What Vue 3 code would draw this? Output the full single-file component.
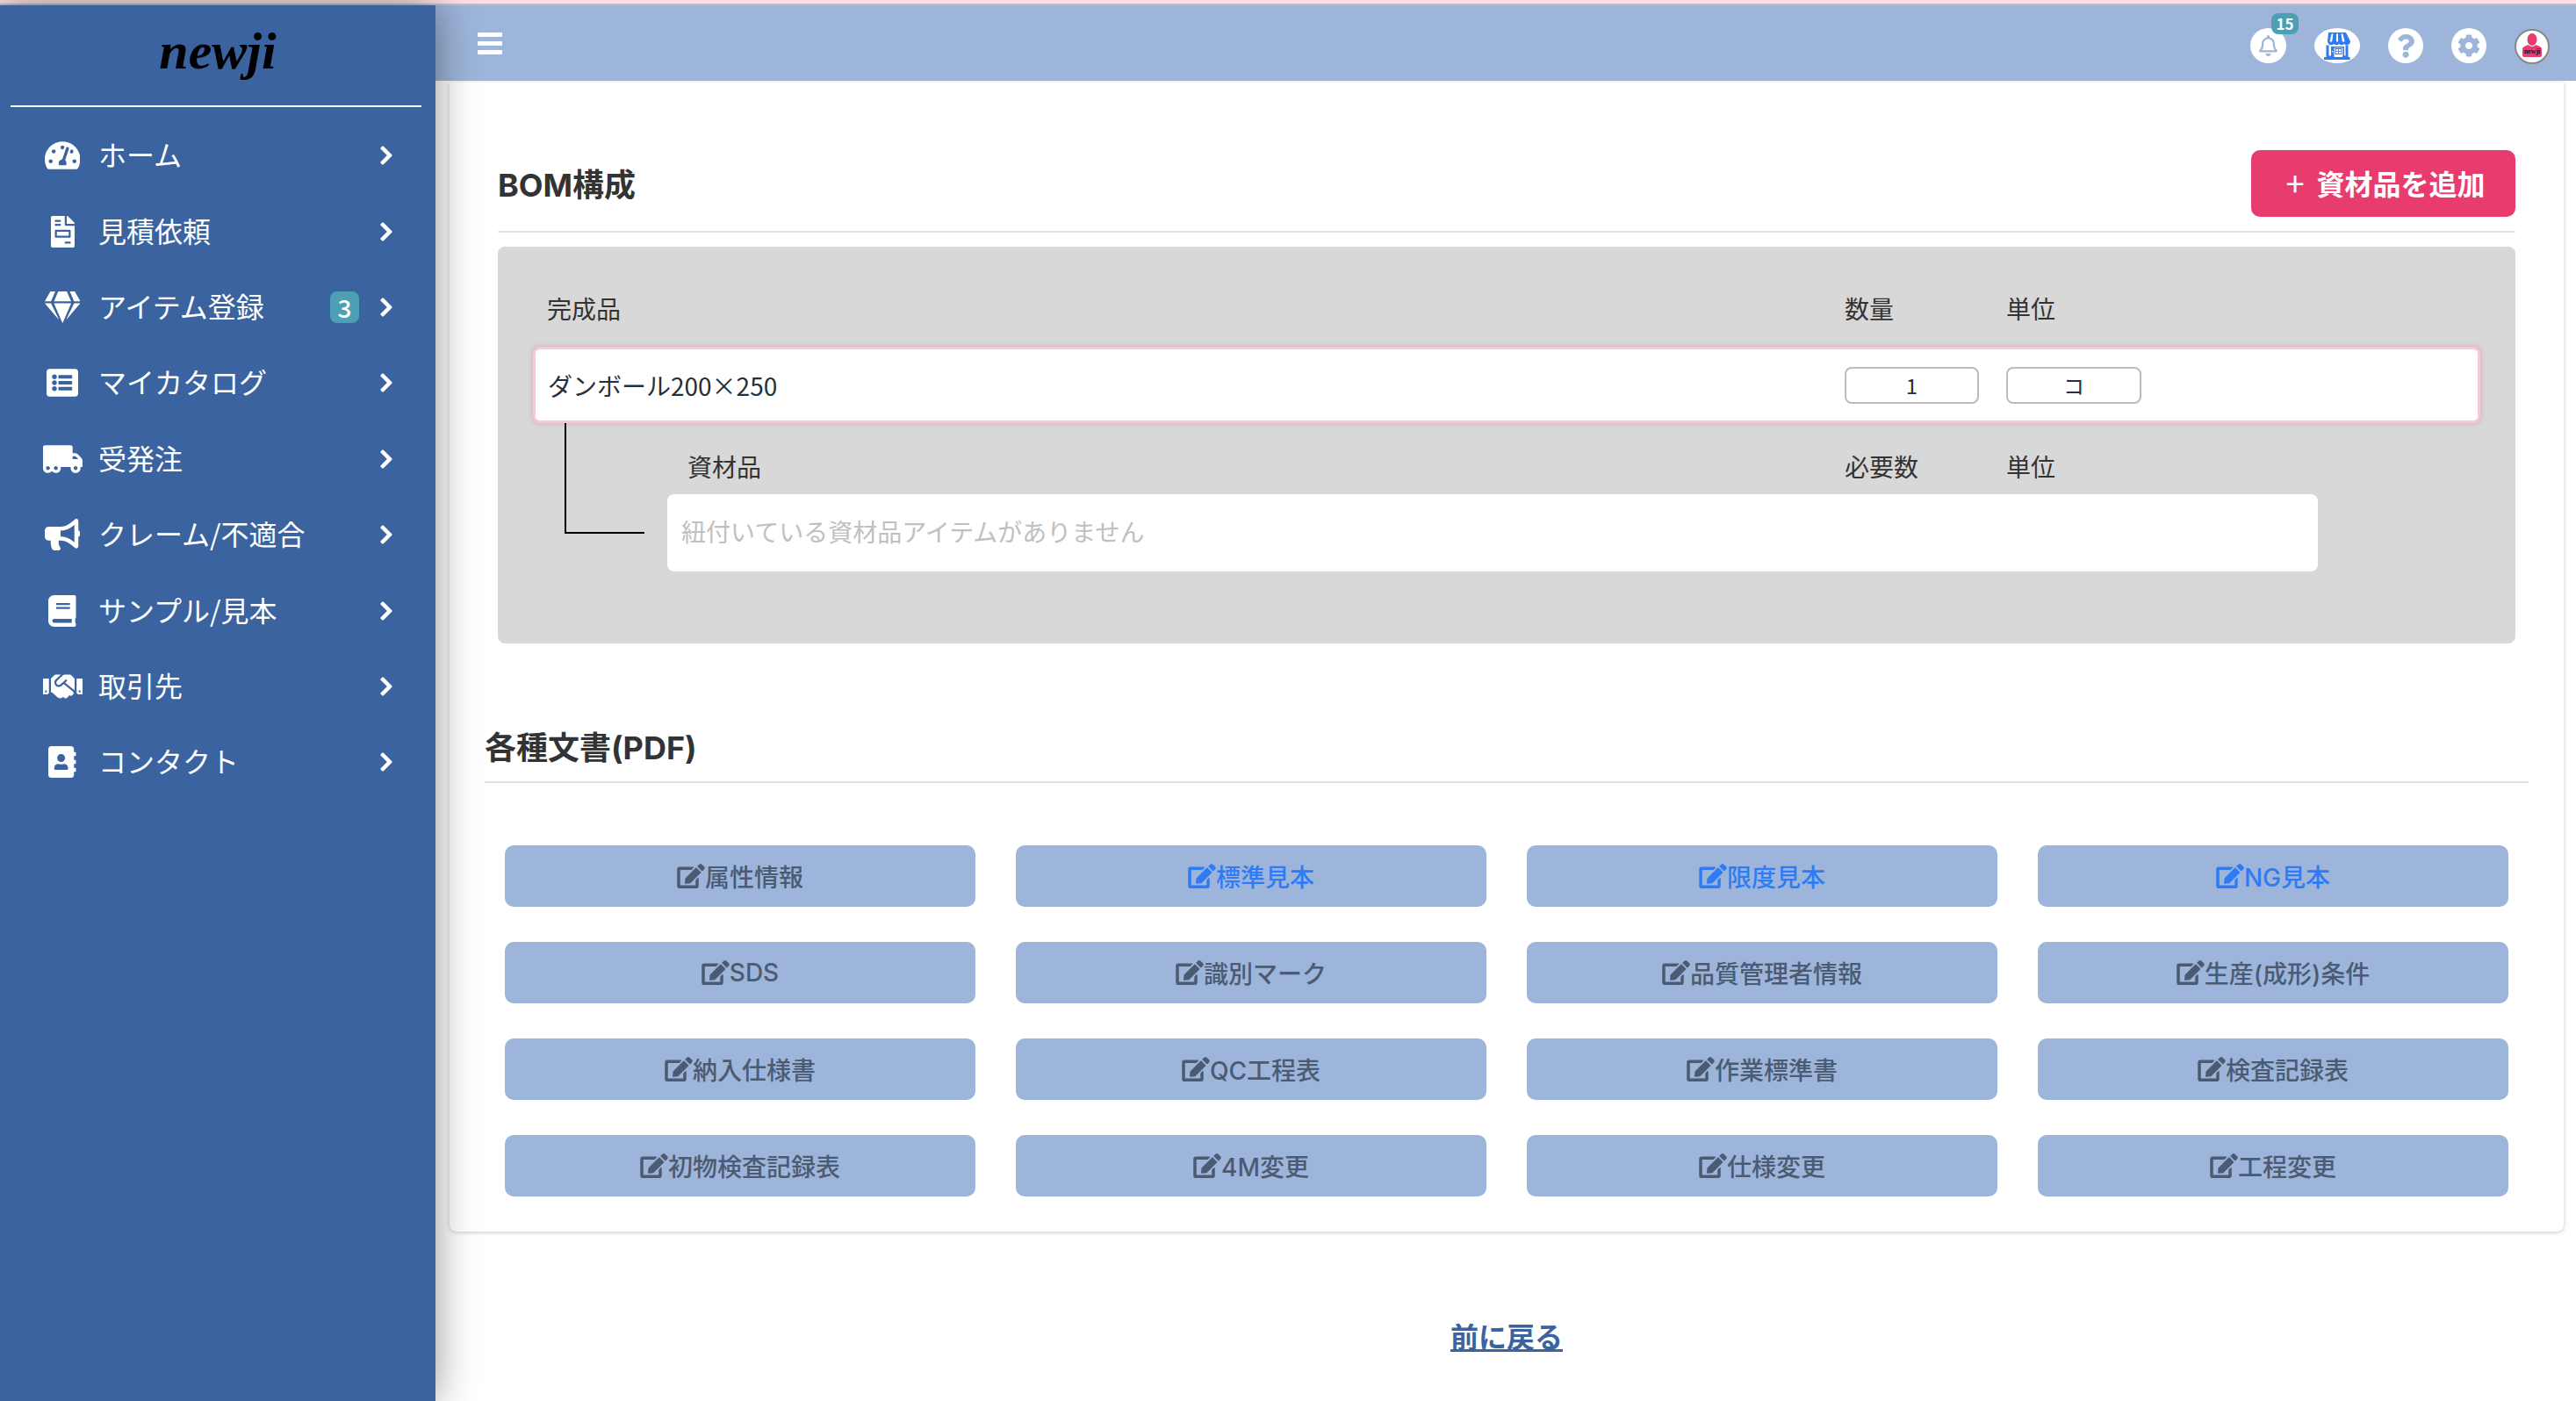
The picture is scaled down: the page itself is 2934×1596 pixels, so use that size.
<script setup>
const menu = [
  { label: 'ホーム', vb: '0 0 576 512', d: 'M288 32C128.94 32 0 160.94 0 320c0 52.8 14.25 102.26 39.06 144.8 5.61 9.62 16.3 15.2 27.44 15.2h443c11.14 0 21.83-5.58 27.44-15.2C561.75 422.26 576 372.8 576 320c0-159.06-128.94-288-288-288zm0 64c14.71 0 26.58 10.13 30.32 23.65-1.11 2.26-2.64 4.23-3.45 6.67l-9.22 27.67c-5.13 3.49-10.97 6.01-17.64 6.01-17.67 0-32-14.33-32-32S270.33 96 288 96zM96 384c-17.67 0-32-14.33-32-32s14.33-32 32-32 32 14.33 32 32-14.33 32-32 32zm48-160c-17.67 0-32-14.33-32-32s14.33-32 32-32 32 14.33 32 32-14.33 32-32 32zm246.77-72.41l-61.33 184C343.13 347.33 352 364.54 352 384c0 11.72-3.38 22.55-8.88 32H232.88c-5.5-9.45-8.88-20.28-8.88-32 0-33.94 26.5-61.43 59.9-63.59l61.34-184.01c4.17-12.56 17.73-19.45 30.36-15.17 12.57 4.19 19.35 17.79 15.17 30.36zm14.66 57.2l15.52-46.55c3.47-1.29 7.13-2.23 11.05-2.23 17.67 0 32 14.33 32 32s-14.33 32-32 32c-11.38-.01-20.89-6.28-26.57-15.22zM480 384c-17.67 0-32-14.33-32-32s14.33-32 32-32 32 14.33 32 32-14.33 32-32 32z' },
  { label: '見積依頼', vb: '0 0 384 512', d: 'M288 256H96v64h192v-64zm89-151L279.1 7c-4.5-4.5-10.6-7-17-7H256v128h128v-6.1c0-6.3-2.5-12.4-7-16.9zm-153 31V0H24C10.7 0 0 10.7 0 24v464c0 13.3 10.7 24 24 24h336c13.3 0 24-10.7 24-24V160H248c-13.2 0-24-10.8-24-24zM64 72c0-4.42 3.58-8 8-8h80c4.42 0 8 3.58 8 8v16c0 4.42-3.58 8-8 8H72c-4.42 0-8-3.58-8-8V72zm0 64c0-4.42 3.58-8 8-8h80c4.42 0 8 3.58 8 8v16c0 4.42-3.58 8-8 8H72c-4.42 0-8-3.58-8-8v-16zm256 304c0 4.42-3.58 8-8 8h-80c-4.42 0-8-3.58-8-8v-16c0-4.42 3.58-8 8-8h80c4.42 0 8 3.58 8 8v16zm0-200v96c0 8.84-7.16 16-16 16H80c-8.84 0-16-7.16-16-16v-96c0-8.84 7.16-16 16-16h224c8.84 0 16 7.16 16 16z' },
  { label: 'アイテム登録', badge: 3, vb: '0 0 576 512', d: 'M485.5 0L576 160H474.9L405.7 0h79.8zm-128 0l69.2 160H149.3L218.5 0h139zm-267 0h79.8l-69.2 160H0L90.5 0zM0 192h100.7l123 251.7c1.5 3.1-2.7 5.9-5 3.3L0 192zm148.2 0h279.6l-137 318.2c-1 2.4-4.5 2.4-5.5 0L148.2 192zm204.1 251.7l123-251.7H576L357.3 446.9c-2.3 2.7-6.5-.1-5-3.2z' },
  { label: 'マイカタログ', vb: '0 0 512 512', d: 'M464 480H48c-26.51 0-48-21.49-48-48V80c0-26.51 21.49-48 48-48h416c26.51 0 48 21.49 48 48v352c0 26.51-21.49 48-48 48zM128 120c-22.091 0-40 17.909-40 40s17.909 40 40 40 40-17.909 40-40-17.909-40-40-40zm0 96c-22.091 0-40 17.909-40 40s17.909 40 40 40 40-17.909 40-40-17.909-40-40-40zm0 96c-22.091 0-40 17.909-40 40s17.909 40 40 40 40-17.909 40-40-17.909-40-40-40zm288-136v-32c0-6.627-5.373-12-12-12H204c-6.627 0-12 5.373-12 12v32c0 6.627 5.373 12 12 12h200c6.627 0 12-5.373 12-12zm0 96v-32c0-6.627-5.373-12-12-12H204c-6.627 0-12 5.373-12 12v32c0 6.627 5.373 12 12 12h200c6.627 0 12-5.373 12-12zm0 96v-32c0-6.627-5.373-12-12-12H204c-6.627 0-12 5.373-12 12v32c0 6.627 5.373 12 12 12h200c6.627 0 12-5.373 12-12z' },
  { label: '受発注', vb: '0 0 640 512', d: 'M621.3 237.3l-58.5-58.5c-12-12-28.3-18.7-45.3-18.7H480V64c0-17.7-14.3-32-32-32H32C14.3 32 0 46.3 0 64v336c0 44.2 35.8 80 80 80 26.3 0 49.4-12.9 64-32.4 14.6 19.6 37.7 32.4 64 32.4 44.2 0 80-35.8 80-80 0-5.5-.6-10.8-1.6-16h163.2c-1.1 5.2-1.6 10.5-1.6 16 0 44.2 35.8 80 80 80s80-35.8 80-80c0-5.5-.6-10.8-1.6-16H624c8.8 0 16-7.2 16-16v-85.5c0-17-6.7-33.2-18.7-45.2zM80 432c-17.6 0-32-14.4-32-32s14.4-32 32-32 32 14.4 32 32-14.4 32-32 32zm128 0c-17.6 0-32-14.4-32-32s14.4-32 32-32 32 14.4 32 32-14.4 32-32 32zm272-224h37.5c4.3 0 8.3 1.7 11.3 4.7l43.3 43.3H480v-48zm48 224c-17.6 0-32-14.4-32-32s14.4-32 32-32 32 14.4 32 32-14.4 32-32 32z' },
  { label: 'クレーム/不適合', vb: '0 0 576 512', d: 'M576 240c0-23.63-12.95-44.04-32-55.12V32.01C544 23.26 537.02 0 512 0c-7.12 0-14.19 2.38-19.98 7.02l-85.03 68.03C364.28 109.19 310.66 128 256 128H64c-35.35 0-64 28.65-64 64v96c0 35.35 28.65 64 64 64h33.7c-1.39 10.48-2.18 21.14-2.18 32 0 39.77 9.26 77.35 25.56 110.94 5.19 10.69 16.52 17.06 28.4 17.06h74.28c26.05 0 41.69-29.84 25.9-50.56-16.4-21.52-26.15-48.36-26.15-77.44 0-11.11 1.62-21.79 4.41-32H256c54.66 0 108.28 18.81 150.98 52.95l85.03 68.03a32.023 32.023 0 0 0 19.98 7.02c24.92 0 32-22.78 32-32V295.13C563.05 284.04 576 263.63 576 240zm-96 141.42l-33.05-26.44C392.95 311.78 325.12 288 256 288v-96c69.12 0 136.95-23.78 190.95-66.98L480 98.58v282.84z' },
  { label: 'サンプル/見本', vb: '0 0 448 512', d: 'M448 360V24c0-13.3-10.7-24-24-24H96C43 0 0 43 0 96v320c0 53 43 96 96 96h328c13.3 0 24-10.7 24-24v-16c0-7.5-3.5-14.3-8.9-18.7-4.2-15.4-4.2-59.3 0-74.7 5.4-4.3 8.9-11.1 8.9-18.6zM128 134c0-3.3 2.7-6 6-6h212c3.3 0 6 2.7 6 6v20c0 3.3-2.7 6-6 6H134c-3.3 0-6-2.7-6-6v-20zm0 64c0-3.3 2.7-6 6-6h212c3.3 0 6 2.7 6 6v20c0 3.3-2.7 6-6 6H134c-3.3 0-6-2.7-6-6v-20zm253.4 250H96c-17.7 0-32-14.3-32-32 0-17.6 14.4-32 32-32h285.4c-1.9 17.1-1.9 46.9 0 64z' },
  { label: '取引先', vb: '0 0 640 512', d: 'M434.7 64h-85.9c-8 0-15.7 3-21.6 8.4l-98.3 90c-.1.1-.2.3-.3.4-16.6 15.6-16.3 40.5-2.1 56 12.7 13.9 39.4 17.6 56.1 2.7.1-.1.3-.1.4-.2l79.9-73.2c6.5-5.9 16.7-5.5 22.6 1 6 6.5 5.5 16.6-1 22.6l-26.1 23.9L504 313.8c2.9 2.4 5.5 5 7.9 7.7V128l-54.6-54.6c-5.9-6-14.1-9.4-22.6-9.4zM544 128.2v223.9c0 17.7 14.3 32 32 32h64V128.2h-96zm48 223.9c-8.8 0-16-7.2-16-16s7.2-16 16-16 16 7.2 16 16-7.2 16-16 16zM0 384h64c17.7 0 32-14.3 32-32V128.2H0V384zm48-63.9c8.8 0 16 7.2 16 16s-7.2 16-16 16-16-7.2-16-16c0-8.9 7.2-16 16-16zm435.9 18.6L334.6 217.5l-30 27.5c-29.7 27.1-75.2 24.5-101.7-4.4-26.9-29.4-24.8-74.9 4.4-101.7L289.1 64h-83.8c-8.5 0-16.6 3.4-22.6 9.4L128 128v223.9h18.3l90.5 81.9c27.4 22.3 67.7 18.1 90-9.3l.2-.2 17.9 15.5c15.9 13 39.4 10.5 52.3-5.4l31.4-38.6 5.4 4.4c13.7 11.1 33.9 9.1 45-4.7l9.5-11.7c11.2-13.8 9.1-33.9-4.6-45.1z' },
  { label: 'コンタクト', vb: '0 0 448 512', d: 'M436 160c6.6 0 12-5.4 12-12v-40c0-6.6-5.4-12-12-12h-20V48c0-26.5-21.5-48-48-48H48C21.5 0 0 21.5 0 48v416c0 26.5 21.5 48 48 48h320c26.5 0 48-21.5 48-48v-48h20c6.6 0 12-5.4 12-12v-40c0-6.6-5.4-12-12-12h-20v-64h20c6.6 0 12-5.4 12-12v-40c0-6.6-5.4-12-12-12h-20v-64h20zm-228-32c35.3 0 64 28.7 64 64s-28.7 64-64 64-64-28.7-64-64 28.7-64 64-64zm112 236.8c0 10.6-10 19.2-22.4 19.2H118.4C106 384 96 375.4 96 364.8v-19.2c0-31.8 30.1-57.6 67.2-57.6h5c12.3 5.1 25.7 8 39.8 8s27.6-2.9 39.8-8h5c37.1 0 67.2 25.8 67.2 57.6v19.2z' }
]

const docs = [
  { label: '属性情報' }, { label: '標準見本', on: true }, { label: '限度見本', on: true }, { label: 'NG見本', on: true },
  { label: 'SDS' }, { label: '識別マーク' }, { label: '品質管理者情報' }, { label: '生産(成形)条件' },
  { label: '納入仕様書' }, { label: 'QC工程表' }, { label: '作業標準書' }, { label: '検査記録表' },
  { label: '初物検査記録表' }, { label: '4M変更' }, { label: '仕様変更' }, { label: '工程変更' }
]

const editPath = 'M402.6 83.2l90.2 90.2c3.8 3.8 3.8 10 0 13.8L274.4 405.6l-92.8 10.3c-12.4 1.4-22.9-9.1-21.5-21.5l10.3-92.8L388.8 83.2c3.8-3.8 10-3.8 13.8 0zm162-22.9l-48.8-48.8c-15.2-15.2-39.9-15.2-55.2 0l-35.4 35.4c-3.8 3.8-3.8 10 0 13.8l90.2 90.2c3.8 3.8 10 3.8 13.8 0l35.4-35.4c15.2-15.3 15.2-40 0-55.2zM384 346.2V448H64V128h229.8c3.2 0 6.2-1.3 8.5-3.5l40-40c7.6-7.6 2.2-20.5-8.5-20.5H48C21.5 64 0 85.5 0 112v352c0 26.5 21.5 48 48 48h352c26.5 0 48-21.5 48-48V306.2c0-10.7-12.9-16-20.5-8.5l-40 40c-2.2 2.3-3.5 5.3-3.5 8.5z'
const chevron = 'M285.476 272.971L91.132 467.314c-9.373 9.373-24.569 9.373-33.941 0l-22.667-22.667c-9.357-9.357-9.375-24.522-.04-33.901L188.505 256 34.484 101.255c-9.335-9.379-9.317-24.544.04-33.901l22.667-22.667c9.373-9.373 24.569-9.373 33.941 0L285.475 239.03c9.373 9.372 9.373 24.568.001 33.941z'
</script>

<template>
  <div class="page">
    <div class="strip"></div>
    <div class="body">
      <aside class="sidebar">
        <div class="logo">newji</div>
        <div class="logo-rule"></div>
        <nav class="menu">
          <a v-for="m in menu" :key="m.label" class="menu-item">
            <span class="menu-icon">
              <svg :viewBox="m.vb" class="fa36"><path :d="m.d" fill="#fff" /></svg>
            </span>
            <span class="menu-label">{{ m.label }}</span>
            <span v-if="m.badge" class="menu-badge">{{ m.badge }}</span>
            <svg viewBox="0 0 320 512" class="chev"><path :d="chevron" fill="#fff" stroke="#fff" stroke-width="18" /></svg>
          </a>
        </nav>
      </aside>

      <div class="main">
        <header class="topbar">
          <div class="burger"><i></i><i></i><i></i></div>
          <div class="top-icons">
            <div class="circle bell">
              <svg viewBox="0 0 448 512" class="ic-bell"><path fill="#9db5da" d="M439.39 362.29c-19.32-20.76-55.47-51.99-55.47-154.29 0-77.7-54.48-139.9-127.94-155.16V32c0-17.67-14.32-32-31.98-32s-31.98 14.33-31.98 32v20.84C118.56 68.1 64.08 130.3 64.08 208c0 102.3-36.15 133.53-55.47 154.29-6 6.45-8.66 14.16-8.61 21.71.11 16.4 12.98 32 32.1 32h383.8c19.12 0 32-15.6 32.1-32 .05-7.55-2.61-15.27-8.61-21.71zM67.53 368c21.22-27.97 44.42-74.33 44.53-159.42 0-.2-.06-.38-.06-.58 0-61.86 50.14-112 112-112s112 50.14 112 112c0 .2-.06.38-.06.58.11 85.1 23.31 131.46 44.53 159.42H67.53zM224 512c35.32 0 63.97-28.65 63.97-64H160.03c0 35.35 28.65 64 63.97 64z" /></svg>
              <span class="bell-badge">15</span>
            </div>
            <div class="circle store">
              <svg viewBox="0 0 30 31" class="ic-store">
                <path fill="#2f7bf6" d="M5 0h20l5 10c0 2.6-1.8 4.2-4 4.2-1.2 0-2.2-.5-3-1.300-.8.8-1.900 1.300-3.200 1.300-1 0-2-.4-2.800-1.200-.8.8-1.800 1.200-2.800 1.200-1.200 0-2.300-.5-3.100-1.300-.8.8-1.900 1.300-3.100 1.300-2.200 0-4-1.600-4-4.200z" />
                <path fill="#fff" d="M8.600 1.500h1.900l-1.400 9H6.400zM14 1.500h2v9h-2zM19.500 1.500h1.900l2.200 9h-2.700z" />
                <path fill="#2f7bf6" d="M2.500 14.500h3v12h3.500v-9.500h11v9.500h4.500v-12h3v13.500h2V31H0v-3h2.500z" />
                <rect x="9" y="17" width="12" height="11" fill="#fff" />
                <path fill="#2f7bf6" d="M8 16h3.500v12H8zM11 16h11v1.500H11zM21.500 16h1.500v12h-1.500z" />
                <rect x="13" y="18.500" width="7" height="6" fill="#fff" stroke="#2f7bf6" stroke-width="1" />
                <path stroke="#2f7bf6" stroke-width=".8" d="M16.500 18.500v6M13 21.500h7" />
                <rect x="9.200" y="21" width="1.200" height="1.500" fill="#fff" />
              </svg>
            </div>
            <div class="circle">
              <svg viewBox="0 0 384 512" class="ic-help"><path fill="#9db5da" d="M202.021 0C122.202 0 70.503 32.703 29.914 91.026c-7.363 10.58-5.093 25.086 5.178 32.874l43.138 32.709c10.373 7.865 25.132 6.026 33.253-4.148 25.049-31.381 43.63-49.449 82.757-49.449 30.764 0 68.816 19.799 68.816 49.631 0 22.552-18.617 34.134-48.993 51.164-35.423 19.86-82.299 44.576-82.299 106.405V320c0 13.255 10.745 24 24 24h72.471c13.255 0 24-10.745 24-24v-5.773c0-42.86 125.268-44.645 125.268-160.627C377.504 66.256 286.902 0 202.021 0zM192 373.459c-38.196 0-69.271 31.075-69.271 69.271 0 38.195 31.075 69.27 69.271 69.27s69.271-31.075 69.271-69.271-31.075-69.27-69.271-69.27z" /></svg>
            </div>
            <div class="circle">
              <svg viewBox="0 0 512 512" class="ic-gear"><path fill="#9db5da" d="M487.4 315.7l-42.6-24.6c4.3-23.2 4.3-47 0-70.2l42.6-24.6c4.9-2.8 7.1-8.6 5.5-14-11.1-35.6-30-67.8-54.7-94.6-3.8-4.1-10-5.1-14.8-2.3L380.8 110c-17.9-15.4-38.5-27.3-60.8-35.1V25.8c0-5.6-3.9-10.5-9.4-11.7-36.7-8.2-74.3-7.8-109.2 0-5.5 1.2-9.4 6.1-9.4 11.7V75c-22.2 7.9-42.8 19.8-60.8 35.1L88.7 85.5c-4.9-2.8-11-1.9-14.8 2.3-24.7 26.7-43.6 58.9-54.7 94.6-1.7 5.4.6 11.2 5.5 14L67.3 221c-4.3 23.2-4.3 47 0 70.2l-42.6 24.6c-4.9 2.8-7.1 8.6-5.5 14 11.1 35.6 30 67.8 54.7 94.6 3.8 4.1 10 5.1 14.8 2.3l42.6-24.6c17.9 15.4 38.5 27.3 60.8 35.1v49.2c0 5.6 3.9 10.5 9.4 11.7 36.7 8.2 74.3 7.8 109.2 0 5.5-1.2 9.4-6.1 9.4-11.7v-49.2c22.2-7.9 42.8-19.8 60.8-35.1l42.6 24.6c4.9 2.8 11 1.9 14.8-2.3 24.7-26.7 43.6-58.9 54.7-94.6 1.5-5.5-.7-11.3-5.6-14.1zM256 336c-44.1 0-80-35.9-80-80s35.9-80 80-80 80 35.9 80 80-35.9 80-80 80z" /></svg>
            </div>
            <div class="avatar">
              <svg viewBox="0 0 36 36" class="ic-avatar">
                <ellipse cx="18" cy="10" rx="5.500" ry="7" fill="#e83b6e" />
                <path fill="#e83b6e" d="M14 16c-3 1-6 2-7 4v8c0 1 1 2 2 2h18c1 0 2-1 2-2v-8c-1-2-4-3-7-4-1 1.500-2.500 2-4 2s-3-.5-4-2z" />
                <text x="18" y="26" class="avatar-text" text-anchor="middle">newji</text>
              </svg>
            </div>
          </div>
        </header>

        <section class="panel">
          <div class="title-row">
            <h2 class="title">BOM構成</h2>
            <button class="add-btn"><span class="plus">+</span>資材品を追加</button>
          </div>

          <div class="bom">
            <div class="cols head">
              <span>完成品</span><span>数量</span><span>単位</span>
            </div>
            <div class="cols product">
              <span class="product-name">ダンボール200×250</span>
              <span class="field">1</span>
              <span class="field">コ</span>
            </div>
            <div class="sub">
              <div class="connector"></div>
              <div class="cols head sub-head">
                <span>資材品</span><span>必要数</span><span>単位</span>
              </div>
              <div class="empty">紐付いている資材品アイテムがありません</div>
            </div>
          </div>

          <div class="docs-head">
            <h2 class="title">各種文書(PDF)</h2>
          </div>
          <div class="docs">
            <a v-for="d in docs" :key="d.label" class="doc" :class="{ on: d.on }">
              <svg viewBox="0 0 576 512" class="doc-icon"><path :d="editPath" fill="currentColor" /></svg>{{ d.label }}
            </a>
          </div>
        </section>

        <div class="back"><a class="back-link">前に戻る</a></div>
      </div>
    </div>
  </div>
</template>

<style>
html, body { margin: 0; background: #fff; overflow: hidden; }
</style>

<style scoped>
* { box-sizing: border-box; }
.page {
  width: 2934px;
  height: 1596px;
  display: flex;
  flex-direction: column;
  font-family: "Noto Sans CJK JP", "Noto Sans", sans-serif;
  color: #2c3a4b;
  overflow: hidden;
}
.strip {
  height: 6px;
  flex: none;
  background: #fbdfe2;
  border-bottom: 2px solid #c6bcc6;
}
.body { flex: 1; display: flex; min-height: 0; }

.sidebar {
  width: 496px;
  flex: none;
  background: #3a63a0;
  box-shadow: 0 0 44px rgba(0, 0, 0, .42);
  position: relative;
  z-index: 2;
}
.logo {
  height: 114px;
  padding-top: 22px;
  text-align: center;
  font-family: "Liberation Serif", serif;
  font-style: italic;
  font-weight: 700;
  font-size: 60px;
  line-height: 60px;
  color: #000;
}
.logo-rule { height: 2px; margin: 0 16px 0 12px; background: #fff; }
.menu { padding-top: 12px; }
.menu-item {
  height: 86.4px;
  display: flex;
  align-items: center;
  padding: 0 48px 0 48px;
  color: #fff;
}
.menu-icon { width: 46px; margin-right: 18px; display: flex; justify-content: center; flex: none; }
.fa36 { height: 36px; display: block; }
.menu-label { flex: 1; font-size: 32px; line-height: 44px; padding-bottom: 4px; }
.menu-badge {
  width: 33px;
  height: 36px;
  margin-right: 23px;
  border-radius: 8px;
  background: #4da0b3;
  color: #fff;
  font-size: 28px;
  font-weight: 500;
  line-height: 36px;
  text-align: center;
}
.chev { width: 16px; height: 24px; display: block; flex: none; }

.main { flex: 1; min-width: 0; display: flex; flex-direction: column; }
.topbar {
  height: 86px;
  flex: none;
  background: #9db5da;
  display: flex;
  align-items: center;
  justify-content: space-between;
  padding: 0 30px 0 48px;
}
.burger { display: flex; flex-direction: column; gap: 5px; }
.burger i { display: block; width: 28px; height: 5px; border-radius: 1px; background: #fff; }
.top-icons { display: flex; align-items: center; gap: 32px; margin-top: 6px; }
.circle {
  width: 40px;
  height: 40px;
  border-radius: 50%;
  background: #fff;
  display: flex;
  align-items: center;
  justify-content: center;
}
.bell { width: 41px; position: relative; }
.ic-bell { height: 24px; display: block; }
.bell-badge {
  position: absolute;
  left: 24px;
  top: -17px;
  width: 31px;
  height: 24px;
  border-radius: 8px;
  background: #4da0b3;
  color: #fff;
  font-size: 17px;
  font-weight: 700;
  line-height: 24px;
  text-align: center;
}
.store { width: 52px; }
.ic-store { width: 30px; height: 31px; display: block; }
.ic-help { height: 27px; display: block; }
.ic-gear { height: 26px; display: block; }
.avatar {
  width: 40px;
  height: 40px;
  border-radius: 50%;
  border: 2px solid #888;
  background: #fff;
  overflow: hidden;
  margin-top: 2px;
}
.ic-avatar { width: 36px; height: 36px; display: block; }
.avatar-text {
  font-family: "Liberation Serif", serif;
  font-weight: 700;
  font-size: 8px;
  fill: #111;
}

.panel {
  margin: 2px 14px 0 16px;
  padding: 77px 40px 40px;
  background: #fff;
  border-radius: 0 0 8px 8px;
  box-shadow: 0 1px 5px rgba(0, 0, 0, .22);
  flex: none;
  height: 1309px;
}
.title-row {
  margin: 0 15px;
  height: 94px;
  padding-bottom: 16px;
  border-bottom: 2px solid #dee2e6;
  display: flex;
  align-items: center;
  justify-content: space-between;
}
.title {
  margin: 0;
  font-family: Inter, "Noto Sans CJK JP", sans-serif;
  font-size: 36px;
  font-weight: 700;
  line-height: 50px;
  padding-top: 3px;
  color: #333;
}
.add-btn {
  width: 301px;
  height: 76px;
  border: 0;
  border-radius: 10px;
  background: #e83b6e;
  color: #fff;
  font-family: inherit;
  font-size: 32px;
  font-weight: 700;
  padding: 0 0 3px 5px;
  display: flex;
  align-items: center;
  justify-content: center;
}
.plus { font-weight: 400; font-size: 38px; margin-right: 14px; line-height: 1; }

.bom {
  margin: 16px 15px 0;
  height: 452px;
  padding: 52px 40px 0;
  background: #d8d8d8;
  border-radius: 8px;
}
.cols {
  display: grid;
  grid-template-columns: 1fr 153px 154px;
  column-gap: 31px;
  padding-right: 386px;
  align-items: center;
}
.head {
  height: 40px;
  margin-bottom: 22px;
  padding-left: 16px;
  font-size: 28px;
  line-height: 36px;
  color: #333;
}
.head span { height: 40px; }
.product {
  height: 87px;
  padding: 0 383px 0 14px;
  background: #fff;
  border: 3px solid #f8c8d9;
  border-radius: 8px;
  box-shadow: 0 0 6px rgba(232, 59, 110, .35);
  font-size: 28px;
  color: #22303f;
}
.product-name { line-height: 40px; }
.field {
  height: 42px;
  border: 2px solid #bbb;
  border-radius: 8px;
  text-align: center;
  font-size: 24px;
  line-height: 38px;
  color: #22303f;
}
.sub { margin: 31px 0 0 153px; position: relative; }
.connector {
  position: absolute;
  left: -117px;
  top: -31px;
  width: 91px;
  height: 126px;
  border-left: 2px solid #000;
  border-bottom: 2px solid #000;
}
.sub-head { margin-bottom: 10px; padding-left: 23px; }
.empty {
  width: 1880px;
  height: 88px;
  padding-left: 16px;
  background: #fff;
  border-radius: 8px;
  font-size: 28px;
  line-height: 84px;
  color: #c0c0c0;
}

.docs-head {
  margin-top: 91px;
  height: 68px;
  border-bottom: 2px solid #dee2e6;
}
.docs {
  margin: 71px 23px 0;
  display: grid;
  grid-template-columns: repeat(4, 536px);
  justify-content: space-between;
  grid-auto-rows: 70px;
  row-gap: 40px;
}
.doc {
  background: #9db5da;
  border-radius: 10px;
  display: flex;
  align-items: center;
  justify-content: center;
  font-family: Inter, "Noto Sans CJK JP", sans-serif;
  font-size: 28px;
  font-weight: 500;
  color: #4a5b72;
}
.doc.on { color: #2f7bf6; }
.doc-icon { height: 28px; width: 32px; display: block; flex: none; }

.back { margin-top: 88px; text-align: center; padding-left: 2px; }
.back-link {
  font-size: 32px;
  font-weight: 700;
  line-height: 60px;
  color: #3a63a0;
  text-decoration: underline;
}
</style>
